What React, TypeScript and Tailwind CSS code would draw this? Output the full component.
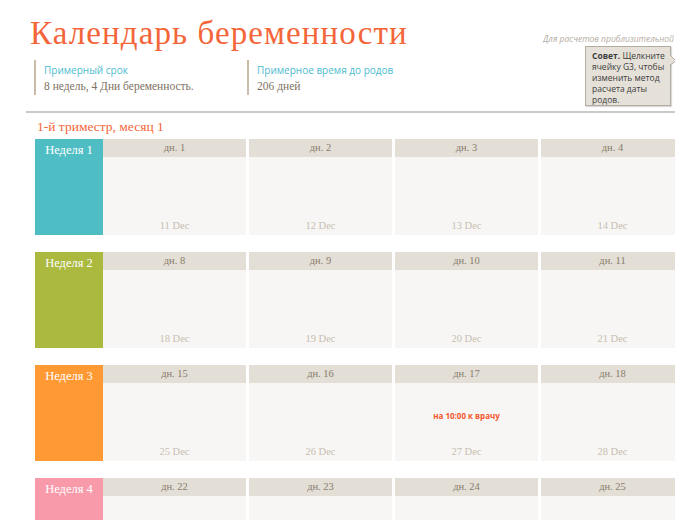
import React from "react";

const weeks = [
  { label: "Неделя 1", color: "bg-[#4fbec4]", days: [1, 2, 3, 4], dates: ["11 Dec", "12 Dec", "13 Dec", "14 Dec"] },
  { label: "Неделя 2", color: "bg-[#abb93f]", days: [8, 9, 10, 11], dates: ["18 Dec", "19 Dec", "20 Dec", "21 Dec"] },
  { label: "Неделя 3", color: "bg-[#ff9933]", days: [15, 16, 17, 18], dates: ["25 Dec", "26 Dec", "27 Dec", "28 Dec"] },
  { label: "Неделя 4", color: "bg-[#f99aab]", days: [22, 23, 24, 25], dates: ["", "", "", ""] },
];

const serif = { fontFamily: '"Liberation Serif", "DejaVu Serif", serif' };

export default function App() {
  return (
    <div className="relative w-[675px] h-[520px] overflow-hidden bg-white" style={serif}>
      <div className="flex items-end pl-[30px] pt-[12px] h-[50px]">
        <h1 className="text-[33px] leading-none tracking-[1.1px] text-[#f4663a] whitespace-nowrap font-['Liberation_Serif',serif]">
          Календарь беременности
        </h1>
        <div className="ml-auto pb-[4px] w-[132px] overflow-hidden whitespace-nowrap italic text-[8.5px] text-[#b5aca2] font-['Open_Sans',sans-serif]">
          Для расчетов приблизительной даты
        </div>
      </div>

      <div className="flex ml-[34px] mt-[10px]">
        <div className="w-[213px] h-[35px] border-l-2 border-[#cbbca9] pl-[8px] pt-[3px]">
          <div className="text-[10px] leading-[14px] text-[#4cbcd0] font-['Open_Sans',sans-serif]">Примерный срок</div>
          <div className="text-[11.5px] leading-[18px] text-[#7d7163]">8 недель, 4 Дни беременность.</div>
        </div>
        <div className="w-[213px] h-[35px] border-l-2 border-[#cbbca9] pl-[8px] pt-[3px]">
          <div className="text-[10px] leading-[14px] text-[#4cbcd0] font-['Open_Sans',sans-serif]">Примерное время до родов</div>
          <div className="text-[11.5px] leading-[18px] text-[#7d7163]">206 дней</div>
        </div>
      </div>

      <div className="ml-[26px] mt-[16px] h-[2px] bg-[#c9c9c9]" />

      <div className="ml-[37px] mt-[5px] h-[21px] text-[13.5px] leading-[18px] text-[#f4663a]">1-й триместр, месяц 1</div>

      <div className="flex flex-col gap-[17px] ml-[35px]">
        {weeks.map((w, wi) => (
          <div key={wi} className="flex h-[96px] shrink-0">
            <div className={`w-[68px] shrink-0 ${w.color} text-white text-[12.5px] leading-[20px] text-center pt-[1px]`}>{w.label}</div>
            <div className="flex gap-[3px]">
              {w.days.map((d, di) => (
                <div key={di} className="w-[143px] flex flex-col shrink-0">
                  <div className="h-[18px] bg-[#e3dfd7] text-[10.5px] leading-[18px] text-[#8a7c6b] text-center">дн. {d}</div>
                  <div className="flex-1 bg-[#f7f6f4] flex flex-col items-center">
                    <div className="flex-1 flex items-center justify-center">
                      {wi === 2 && di === 2 && (
                        <span className="text-[8px] font-bold text-[#f4552b] font-['Open_Sans',sans-serif] mt-[4px]">на 10:00 к врачу</span>
                      )}
                    </div>
                    <div className="h-[16px] text-[10.5px] leading-[14px] text-[#c7beb2]">{w.dates[di]}</div>
                  </div>
                </div>
              ))}
            </div>
          </div>
        ))}
      </div>

      <div className="absolute left-[585px] top-[46px] w-[86px] h-[60px] bg-[#e5e1d9] border border-[#b3aca1] pl-[6px] pt-[3px] text-[8.5px] leading-[11px] text-[#3d3d3d] font-['Open_Sans',sans-serif] shadow-[1px_1px_1px_rgba(0,0,0,0.15)]">
        <b>Совет.</b> Щелкните
        <br />
        ячейку G3, чтобы
        <br />
        изменить метод
        <br />
        расчета даты
        <br />
        родов.
        <svg className="absolute -right-[6px] top-[8px]" width="6" height="10" viewBox="0 0 6 10">
          <path d="M0 0 L6 6 L0 10" fill="#e5e1d9" stroke="#b3aca1" strokeWidth="1" />
        </svg>
      </div>
    </div>
  );
}
